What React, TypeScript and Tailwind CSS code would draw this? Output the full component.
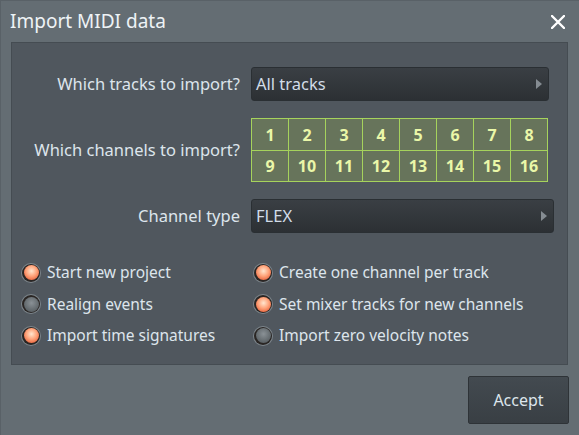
import React from "react";

const font = { fontFamily: '"Noto Sans", "Open Sans", sans-serif' };

function Radio({ on }: { on: boolean }) {
  return (
    <span className="flex h-[20px] w-[20px] shrink-0 items-center justify-center rounded-full bg-[#7c858b]">
      <span className="flex h-[18px] w-[18px] items-center justify-center rounded-full bg-[#2a2624]">
        <span
          className={
            on
              ? "h-[15px] w-[15px] rounded-full bg-[radial-gradient(circle_at_50%_40%,#ffe6cf_0%,#ffa37a_45%,#dc4520_100%)]"
              : "h-[15px] w-[15px] rounded-full bg-[radial-gradient(circle_at_50%_40%,#8a9196_0%,#6a7175_50%,#4a5054_100%)]"
          }
        />
      </span>
    </span>
  );
}

function Option({ on, label }: { on: boolean; label: string }) {
  return (
    <div className="flex h-[31.5px] items-center gap-[6px]">
      <Radio on={on} />
      <span className="text-[15.5px] text-[#dde5ec]">{label}</span>
    </div>
  );
}

function Dropdown({ text, w }: { text: string; w: string }) {
  return (
    <div
      className={`flex h-[34px] ${w} items-center justify-between rounded-[3px] border border-[#2a2f33] bg-gradient-to-b from-[#3a3f44] to-[#2c3034] pl-[4px] pr-[6px]`}
    >
      <span className="text-[16.5px] text-[#d2dce8]">{text}</span>
      <svg width="6" height="10" viewBox="0 0 6 10">
        <path d="M0 0 L6 5 L0 10 Z" fill="#858c92" />
      </svg>
    </div>
  );
}

export default function App() {
  const nums = Array.from({ length: 16 }, (_, i) => i + 1);
  const label = "w-[239px] pr-[11px] text-right text-[16.5px] text-[#dde5ec]";
  return (
    <div
      className="flex h-[435px] w-[579px] flex-col border-l border-t border-[#596167] bg-[#646d73]"
      style={font}
    >
      <div className="flex h-[41px] items-center justify-between pl-[9px] pr-[14px]">
        <span className="text-[19px] text-[#eef3f6]">Import MIDI data</span>
        <svg width="14" height="14" viewBox="0 0 14 14">
          <path d="M1 1 L13 13 M13 1 L1 13" stroke="#ffffff" strokeWidth="2.4" strokeLinecap="round" />
        </svg>
      </div>

      <div className="ml-[10px] flex h-[323px] w-[557px] flex-col border border-[#454c52] bg-[#50575e]">
        <div className="mt-[24px] flex items-center">
          <div className={label}>Which tracks to import?</div>
          <Dropdown text="All tracks" w="w-[298px]" />
        </div>

        <div className="mt-[17px] flex items-center">
          <div className={label}>Which channels to import?</div>
          <div className="grid w-[297px] grid-cols-8 gap-[1px] border border-[#a6d35c] bg-[#a6d35c]">
            {nums.map((n) => (
              <div
                key={n}
                className={`flex ${n <= 8 ? "h-[31px]" : "h-[30px]"} items-center justify-center bg-[#67745b] text-[16px] font-bold text-[#eaf7a8]`}
              >
                {n}
              </div>
            ))}
          </div>
        </div>

        <div className="mt-[17px] flex items-center">
          <div className={label}>Channel type</div>
          <Dropdown text="FLEX" w="w-[303px]" />
        </div>

        <div className="mt-[24px] flex pl-[9px]">
          <div className="flex w-[232px] flex-col">
            <Option on label="Start new project" />
            <Option on={false} label="Realign events" />
            <Option on label="Import time signatures" />
          </div>
          <div className="flex flex-col">
            <Option on label="Create one channel per track" />
            <Option on label="Set mixer tracks for new channels" />
            <Option on={false} label="Import zero velocity notes" />
          </div>
        </div>
      </div>

      <div className="mt-[11px] flex justify-end pr-[10px]">
        <div className="flex h-[48px] w-[101px] items-center justify-center rounded-[2px] border border-[#2e3337] bg-gradient-to-b from-[#434a50] to-[#393f44] text-[16px] text-[#dde5ec]">
          Accept
        </div>
      </div>
    </div>
  );
}
